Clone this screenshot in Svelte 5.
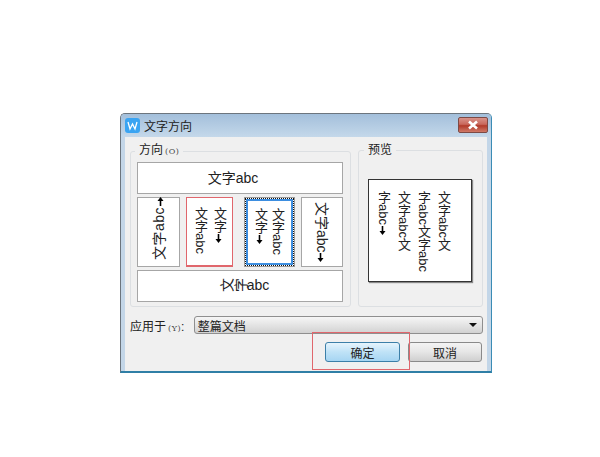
<script>
  const previewLines = ['文字abc文', '字abc文字abc', '文字abc文'];
</script>

{#snippet arrow()}
  <svg class="arrow" viewBox="0 0 7 9" width="7" height="9">
    <path d="M3.5 0 V6" stroke="#000" stroke-width="1.6" />
    <path d="M0.5 5 H6.5 L3.5 9 Z" fill="#000" />
  </svg>
{/snippet}

<div class="page">
  <div class="dialog">
    <div class="titlebar">
      <svg class="logo" viewBox="0 0 15 15" width="15" height="15">
        <rect width="15" height="15" rx="3" fill="#3aa4f2" />
        <polyline points="3,4 5,11 7.5,6 10,11 12,4" fill="none" stroke="#fff" stroke-width="1.3" />
      </svg>
      <span class="title">文字方向</span>
      <button class="close" aria-label="关闭">
        <svg viewBox="0 0 12 10" width="12" height="10">
          <path d="M2 1.5 L10 8.5 M10 1.5 L2 8.5" stroke="#fff" stroke-width="2.6" />
        </svg>
      </button>
    </div>

    <div class="content">
      <div class="groups">
        <fieldset class="group direction">
          <legend>方向<small>(O)</small></legend>
          <div class="option wide first">文字abc</div>
          <div class="row">
            <div class="option up"><span class="side">文字abc{@render arrow()}</span></div>
            <div class="option tall col-red">
              <div class="vcol">文字abc</div>
              <div class="vcol">文字{@render arrow()}</div>
            </div>
            <div class="option tall col-sel">
              <div class="focus">
                <div class="vcol">文字{@render arrow()}</div>
                <div class="vcol">文字abc</div>
              </div>
            </div>
            <div class="option down"><span class="side">文字abc{@render arrow()}</span></div>
          </div>
          <div class="option wide last"><span class="rot">文</span><span class="rot">字</span>abc</div>
        </fieldset>

        <fieldset class="group preview">
          <legend>预览</legend>
          <div class="sheet">
            {#each previewLines as line}
              <div class="vcol">{line}</div>
            {/each}
            <div class="vcol">字abc{@render arrow()}</div>
          </div>
        </fieldset>
      </div>

      <div class="apply">
        <span class="label">应用于<small>(Y)</small>:</span>
        <div class="select">
          <span>整篇文档</span>
          <svg viewBox="0 0 8 4" width="8" height="4"><path d="M0 0 H8 L4 4 Z" fill="#111" /></svg>
        </div>
      </div>

      <div class="actions">
        <button class="btn primary">确定</button>
        <button class="btn">取消</button>
        <div class="mark"></div>
      </div>
    </div>
  </div>
</div>

<style>
  :global(body) {
    background: #fff;
  }

  .page {
    padding: 113px 0 0 120px;
    font-family: "Liberation Sans", "Noto Sans CJK SC", sans-serif;
    color: #222;
    font-size: 13px;
  }

  .dialog {
    width: 372px;
    height: 260px;
    box-sizing: border-box;
    border: 1px solid #6c757e;
    border-right-color: #3b8cb5;
    border-bottom: 2px solid #2f7fa6;
    border-radius: 5px 5px 0 0;
    background: #c3d6e8;
    display: flex;
    flex-direction: column;
  }

  .titlebar {
    height: 23px;
    display: flex;
    align-items: center;
    padding: 0 3px 0 4px;
    gap: 4px;
    background: linear-gradient(#a3bfdb, #c4d8ea);
    border-radius: 4px 4px 0 0;
  }

  .title {
    font-size: 12px;
    color: #222;
    flex: 1;
  }

  .close {
    width: 30px;
    height: 16px;
    margin-top: -1px;
    padding: 0;
    border: 1px solid #7d4a45;
    border-radius: 2px;
    background: linear-gradient(#d9938a 0%, #c9685c 45%, #b23a2a 55%, #cf7a68 100%);
    display: flex;
    align-items: center;
    justify-content: center;
  }

  .content {
    flex: 1;
    margin: 0 4px 0 4px;
    background: #f0f0f0;
    padding: 6px 4px 0 5px;
    display: flex;
    flex-direction: column;
  }

  .groups {
    display: flex;
    gap: 7px;
  }

  .group {
    margin: 0;
    border: 1px solid #dcdfe2;
    border-radius: 3px;
    height: 164px;
    box-sizing: border-box;
    padding: 0;
    min-width: 0;
  }

  legend {
    font-size: 12px;
    line-height: 14px;
    padding: 0 4px;
  }

  small {
    font-family: "DejaVu Serif", serif;
    font-size: 8px;
    letter-spacing: 0.5px;
    margin-left: 2px;
    color: #444;
  }

  .direction {
    width: 221px;
    padding: 3px 7px 0 6px;
    display: flex;
    flex-direction: column;
    gap: 3px;
  }

  .direction legend {
    margin-left: -2px;
  }

  .preview {
    width: 125px;
    padding-left: 9px;
  }

  .preview legend {
    margin-left: -4px;
  }

  .option {
    background: #fff;
    border: 1px solid #a6a6a6;
    box-sizing: border-box;
    display: flex;
    align-items: center;
    justify-content: center;
  }

  .wide {
    height: 32px;
    flex: none;
    font-size: 14px;
  }

  .first {
    padding: 0 14px 3px 0;
  }

  .last {
    padding: 0 0 2px 8px;
  }

  .row {
    display: flex;
    height: 70px;
  }

  .up {
    width: 43px;
    margin-right: 6px;
    padding-bottom: 6px;
  }

  .down {
    width: 42px;
    margin-left: 6px;
  }

  .tall {
    gap: 5px;
  }

  .col-red {
    width: 47px;
    margin-right: 11px;
    border-color: #e0666c;
    box-shadow: inset 0 -1px 0 #e0666c;
    padding-bottom: 8px;
  }

  .col-sel {
    width: 51px;
    padding: 0;
    background: #fff;
    border-color: #9a9a9a;
  }

  .focus {
    flex: 1;
    height: 100%;
    box-sizing: border-box;
    border: 1px dotted #111;
    box-shadow: inset 0 0 0 2px #3d8ee0;
    display: flex;
    justify-content: center;
    gap: 3px;
    padding: 0 2px 8px 0;
    align-items: center;
  }

  .vcol {
    writing-mode: vertical-rl;
    line-height: 14px;
    align-self: flex-start;
    padding-top: 9px;
    white-space: nowrap;
  }

  .focus .vcol {
    padding-top: 9px;
  }

  .arrow {
    display: inline-block;
    margin-top: 1px;
    vertical-align: -1px;
  }

  .side {
    writing-mode: vertical-rl;
    text-orientation: sideways;
    font-size: 14px;
    line-height: 14px;
    white-space: nowrap;
  }

  .side .arrow {
    vertical-align: middle;
  }

  .up .side {
    transform: rotate(180deg);
    letter-spacing: 0.5px;
  }

  .rot {
    display: inline-block;
    transform: rotate(-90deg);
    width: 14px;
  }

  .sheet {
    width: 104px;
    height: 103px;
    margin-top: 22px;
    box-sizing: border-box;
    background: #fff;
    border: 1px solid #333;
    box-shadow: 1px 1px 1px #888;
    display: flex;
    flex-direction: row-reverse;
    gap: 6px;
    padding-right: 21px;
  }

  .sheet .vcol {
    padding-top: 11px;
  }

  .apply {
    display: flex;
    align-items: center;
    margin-top: 9px;
    height: 18px;
    gap: 5px;
  }

  .label {
    font-size: 12px;
    width: 59px;
    white-space: nowrap;
  }

  .select {
    width: 290px;
    height: 18px;
    box-sizing: border-box;
    border: 1px solid #8f8f8f;
    border-radius: 3px;
    background: linear-gradient(#f6f6f6, #e4e4e4 50%, #d2d2d2);
    display: flex;
    align-items: center;
    justify-content: space-between;
    padding: 0 5px 0 3px;
    font-size: 12px;
  }

  .actions {
    display: flex;
    justify-content: flex-end;
    gap: 8px;
    margin-top: 8px;
    padding-right: 1px;
    position: relative;
  }

  .btn {
    width: 74px;
    height: 20px;
    padding: 0;
    border: 1px solid #8a8a8a;
    border-radius: 3px;
    background: linear-gradient(#f4f4f4, #e6e6e6 50%, #cfcfcf);
    font: inherit;
    font-size: 12px;
    color: #222;
  }

  .primary {
    width: 75px;
    border-color: #3c7fa8;
    background: linear-gradient(#e6f4fc, #bfe2f7 50%, #a6d5f2);
  }

  .mark {
    position: absolute;
    right: 73px;
    top: -10px;
    width: 98px;
    height: 38px;
    box-sizing: border-box;
    border: 1px solid #e0666c;
  }
</style>
